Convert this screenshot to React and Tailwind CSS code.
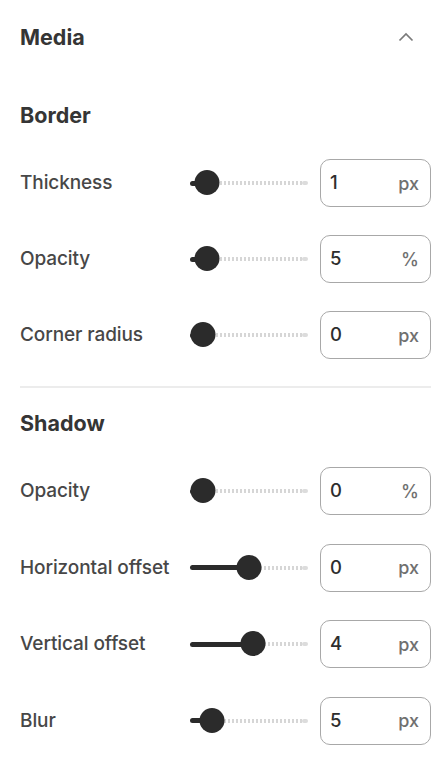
import React from "react";

const F = { fontFamily: "Inter, 'Noto Sans', sans-serif" };

function Slider({ value, min, max }) {
  const pct = (value - min) / (max - min);
  const left = 12.5 + pct * (118 - 25);
  return (
    <div className="relative h-[26px] w-[118px] shrink-0">
      <div className="absolute left-[26px] right-[2px] top-[11px] h-[4px] bg-[repeating-linear-gradient(90deg,#d6d6d6_0_2px,transparent_2px_4px)]" />
      <div className="absolute right-0 top-[11px] h-[4px] w-[6px] rounded-full bg-[#dcdcdc]" />
      <div
        className="absolute left-0 top-[10.5px] h-[5px] rounded-full bg-[#2b2b2b]"
        style={{ width: left }}
      />
      <div
        className="absolute top-0 h-[25px] w-[25px] -translate-x-1/2 rounded-full bg-[#2b2b2b]"
        style={{ left }}
      />
    </div>
  );
}

function Row({ label, value, unit, min, max }) {
  return (
    <div className="flex h-12 items-center">
      <div className="w-[170px] shrink-0 whitespace-nowrap pt-[1px] text-[19px] font-medium tracking-[-0.1px] text-[#474747]">{label}</div>
      <Slider value={value} min={min} max={max} />
      <div className="ml-[12px] flex h-12 w-[111px] items-center justify-between rounded-[10px] border-[1.5px] border-[#a8a8a8] pl-[9px] pr-[11px]">
        <span className="text-[18.5px] font-medium text-[#2e2e2e]">{value}</span>
        <span className="text-[18px] font-medium text-[#707070]">{unit}</span>
      </div>
    </div>
  );
}

export default function App() {
  return (
    <div className="min-h-[764px] w-[448px] bg-white pl-[20px] pr-[17px]" style={F}>
      <div className="mt-[23px] flex h-[28px] items-center justify-between">
        <div className="text-[21.5px] font-bold text-[#353535]">Media</div>
        <svg width="16" height="10" viewBox="0 0 16 10" className="mr-[17px]">
          <path d="M1.5 8.5 L8 2 L14.5 8.5" fill="none" stroke="#7a7a7a" strokeWidth="1.7" />
        </svg>
      </div>
      <div className="mt-[50px] flex h-[28px] items-center text-[21.5px] font-bold text-[#353535]">Border</div>
      <div className="mt-[30px] flex flex-col gap-[28px]">
        <Row label="Thickness" value={1} unit="px" min={0} max={20} />
        <Row label="Opacity" value={5} unit="%" min={0} max={100} />
        <Row label="Corner radius" value={0} unit="px" min={0} max={50} />
      </div>
      <div className="mt-[27px] h-[2px] bg-[#ececec]" />
      <div className="mt-[21px] flex h-[28px] items-center text-[21.5px] font-bold text-[#353535]">Shadow</div>
      <div className="mt-[30px] flex flex-col gap-[28.5px]">
        <Row label="Opacity" value={0} unit="%" min={0} max={100} />
        <Row label="Horizontal offset" value={0} unit="px" min={-50} max={50} />
        <Row label="Vertical offset" value={4} unit="px" min={-50} max={50} />
        <Row label="Blur" value={5} unit="px" min={0} max={50} />
      </div>
    </div>
  );
}
